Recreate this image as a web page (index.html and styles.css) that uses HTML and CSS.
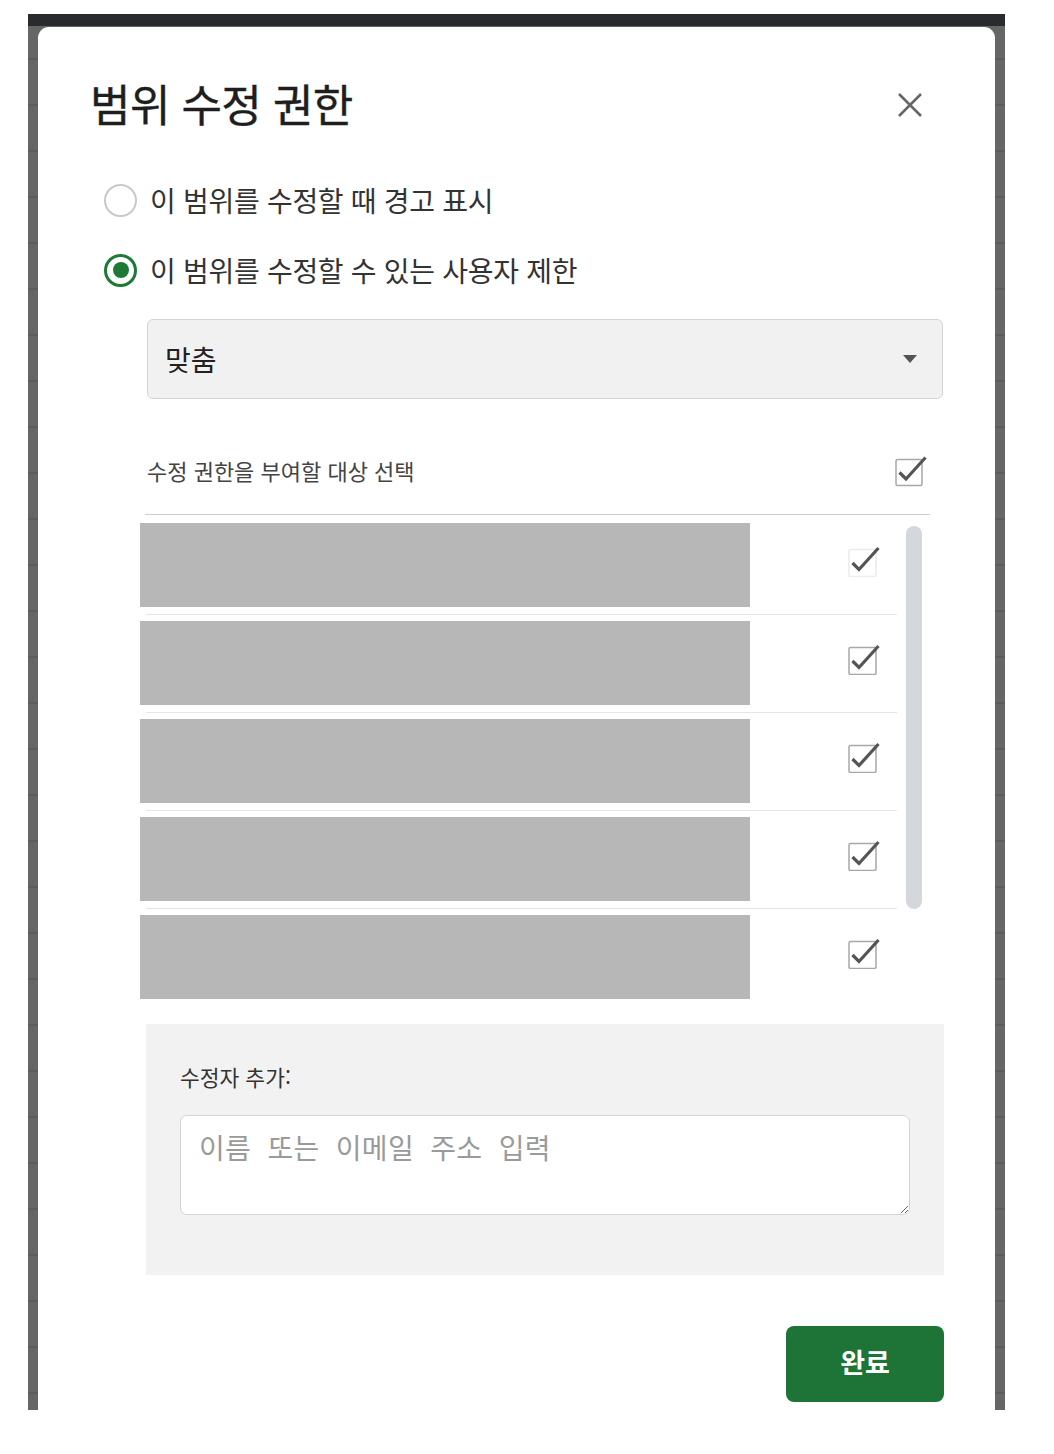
FILE: index.html
```html
<!DOCTYPE html>
<html lang="ko">
<head>
<meta charset="utf-8">
<title>범위 수정 권한</title>
<link rel="stylesheet" href="styles.css">
</head>
<body>
<div class="screen">
  <div class="topbar"></div>
  <div class="dialog">
    <div class="title-row">
      <h1 class="title">범위 수정 권한</h1>
      <svg class="close" width="24" height="24" viewBox="0 0 24 24"><path d="M1 1L23 23M23 1L1 23" stroke="#666" stroke-width="2.6" fill="none"/></svg>
    </div>

    <div class="radio-row">
      <span class="radio"></span>
      <span class="radio-label">이 범위를 수정할 때 경고 표시</span>
    </div>
    <div class="radio-row">
      <span class="radio checked"><span class="dot"></span></span>
      <span class="radio-label">이 범위를 수정할 수 있는 사용자 제한</span>
    </div>

    <div class="select">
      <span class="select-text">맞춤</span>
      <span class="caret"></span>
    </div>

    <div class="list-head">
      <span class="list-head-text">수정 권한을 부여할 대상 선택</span>
      <svg class="cb head-cb" width="32" height="32" viewBox="0 0 32 32"><rect x="1" y="4.5" width="26" height="26" rx="1.5" fill="#fff" stroke="#a8a8a8" stroke-width="1.5"/><polyline points="4.5,17.5 11,24 30.5,2.5" fill="none" stroke="#555" stroke-width="3.2"/></svg>
    </div>

    <div class="list">
      <div class="rows">
        <div class="row"><div class="block"></div><svg class="cb" width="32" height="32" viewBox="0 0 32 32"><rect x="1" y="4.5" width="27" height="27" rx="1.5" fill="#fff" stroke="#ececec" stroke-width="1.5"/><polyline points="4.5,18 11,24.5 30.5,3" fill="none" stroke="#555" stroke-width="3.2"/></svg></div>
        <div class="row"><div class="block"></div><svg class="cb" width="32" height="32" viewBox="0 0 32 32"><rect x="1" y="4.5" width="27" height="27" rx="1.5" fill="#fff" stroke="#a8a8a8" stroke-width="1.5"/><polyline points="4.5,18 11,24.5 30.5,3" fill="none" stroke="#555" stroke-width="3.2"/></svg></div>
        <div class="row"><div class="block"></div><svg class="cb" width="32" height="32" viewBox="0 0 32 32"><rect x="1" y="4.5" width="27" height="27" rx="1.5" fill="#fff" stroke="#a8a8a8" stroke-width="1.5"/><polyline points="4.5,18 11,24.5 30.5,3" fill="none" stroke="#555" stroke-width="3.2"/></svg></div>
        <div class="row"><div class="block"></div><svg class="cb" width="32" height="32" viewBox="0 0 32 32"><rect x="1" y="4.5" width="27" height="27" rx="1.5" fill="#fff" stroke="#a8a8a8" stroke-width="1.5"/><polyline points="4.5,18 11,24.5 30.5,3" fill="none" stroke="#555" stroke-width="3.2"/></svg></div>
        <div class="row last"><div class="block"></div><svg class="cb" width="32" height="32" viewBox="0 0 32 32"><rect x="1" y="4.5" width="27" height="27" rx="1.5" fill="#fff" stroke="#a8a8a8" stroke-width="1.5"/><polyline points="4.5,18 11,24.5 30.5,3" fill="none" stroke="#555" stroke-width="3.2"/></svg></div>
      </div>
      <div class="scroll-track"></div>
    </div>

    <div class="add">
      <div class="add-label">수정자 추가:</div>
      <textarea class="add-input" placeholder="이름  또는  이메일  주소  입력"></textarea>
    </div>

    <div class="actions">
      <button class="done">완료</button>
    </div>
  </div>
</div>
</body>
</html>
```

FILE: styles.css
```css
html, body {
  margin: 0;
  padding: 0;
  background: #fff;
}

body {
  font-family: "Noto Sans CJK KR", "Noto Sans", sans-serif;
  color: #333;
  height: 1454px;
}

.screen {
  margin: 14px 0 0 28px;
  width: 977px;
  height: 1396px;
  background-color: #666;
  background-image: repeating-linear-gradient(to bottom, transparent 0, transparent 44px, #5c5c5c 44px, #5c5c5c 46px);
  display: flex;
  flex-direction: column;
  overflow: hidden;
}

.topbar {
  height: 12px;
  background: #2a2b2e;
  flex: none;
}

.dialog {
  margin: 1px 10px 0 10px;
  background: #fff;
  border-radius: 11px 11px 0 0;
  flex: 1;
  padding: 44px 51px 0 52px;
  display: flex;
  flex-direction: column;
}

.title-row {
  display: flex;
  align-items: center;
  justify-content: space-between;
  height: 64px;
}

.title {
  margin: 0;
  font-size: 44px;
  font-weight: 400;
  color: #1e1e1e;
  letter-spacing: -0.6px;
  -webkit-text-stroke: 0.4px #1e1e1e;
}

.close {
  margin-right: 22px;
  margin-top: 4px;
}

.radio-row {
  display: flex;
  align-items: center;
  height: 70px;
  margin-left: 14px;
}

.title-row + .radio-row {
  margin-top: 30px;
}

.radio {
  width: 33px;
  height: 33px;
  box-sizing: border-box;
  border: 2px solid #c8c8c8;
  border-radius: 50%;
  display: flex;
  align-items: center;
  justify-content: center;
  flex: none;
}

.radio.checked {
  border: 3.5px solid #1d7a35;
}

.dot {
  width: 16px;
  height: 16px;
  border-radius: 50%;
  background: #1d7a35;
}

.radio-label {
  margin-left: 13px;
  font-size: 28px;
  color: #333;
  letter-spacing: -0.3px;
}

.select {
  margin: 14px 1px 0 57px;
  height: 80px;
  box-sizing: border-box;
  background: #f1f1f1;
  border: 1.5px solid #d2d4d8;
  border-radius: 6px;
  display: flex;
  align-items: center;
  justify-content: space-between;
  padding: 0 25px 0 17px;
}

.select-text {
  font-size: 28px;
  color: #222;
}

.caret {
  width: 0;
  height: 0;
  border-left: 7px solid transparent;
  border-right: 7px solid transparent;
  border-top: 8px solid #555;
}

.list-head {
  margin: 40px 14px 0 55px;
  height: 75px;
  border-bottom: 1.5px solid #cfcfcf;
  display: flex;
  align-items: center;
  justify-content: space-between;
  padding: 0 3px 0 2px;
}

.list-head-text {
  font-size: 22px;
  color: #444;
  margin-top: -14px;
}

.head-cb {
  margin-top: -12px;
}

.list {
  margin: 8px 0 0 56px;
  display: flex;
  gap: 9px;
  align-items: flex-start;
}

.rows {
  width: 751px;
  flex: none;
}

.row {
  display: flex;
  align-items: center;
  justify-content: space-between;
  padding-bottom: 7px;
  border-bottom: 1.5px solid #e6e6e6;
  margin-bottom: 6px;
  padding-right: 17px;
}

.row .cb {
  margin-top: -8px;
}

.row.last {
  border-bottom: none;
  padding-bottom: 0;
  margin-bottom: 0;
}

.block {
  width: 610px;
  height: 84px;
  margin-left: -6px;
  background: #b7b7b7;
}

.scroll-track {
  width: 16px;
  height: 383px;
  margin-top: 3px;
  border-radius: 8px;
  background: #d4d8dd;
}

.add {
  margin: 25px 0 0 56px;
  background: #f2f2f2;
  padding: 39px 34px 60px 34px;
  display: flex;
  flex-direction: column;
}

.add-label {
  font-size: 21.5px;
  color: #333;
  height: 28px;
  line-height: 28px;
}

.add-input {
  margin-top: 24px;
  height: 100px;
  box-sizing: border-box;
  border: 1.5px solid #d2d4d8;
  border-radius: 7px;
  background: #fff;
  padding: 11px 18px;
  font-family: "Noto Sans CJK KR", "Noto Sans", sans-serif;
  font-size: 28px;
  color: #333;
  resize: vertical;
  outline: none;
}

.add-input::placeholder {
  color: #9a9a9a;
  letter-spacing: 0.3px;
}

.actions {
  display: flex;
  justify-content: flex-end;
  margin-top: 51px;
}

.done {
  width: 158px;
  height: 76px;
  border: none;
  border-radius: 8px;
  background: #1d7436;
  color: #fff;
  font-family: "Noto Sans CJK KR", "Noto Sans", sans-serif;
  font-size: 27px;
  font-weight: 700;
  padding: 0 0 5px 0;
  cursor: pointer;
}
```
